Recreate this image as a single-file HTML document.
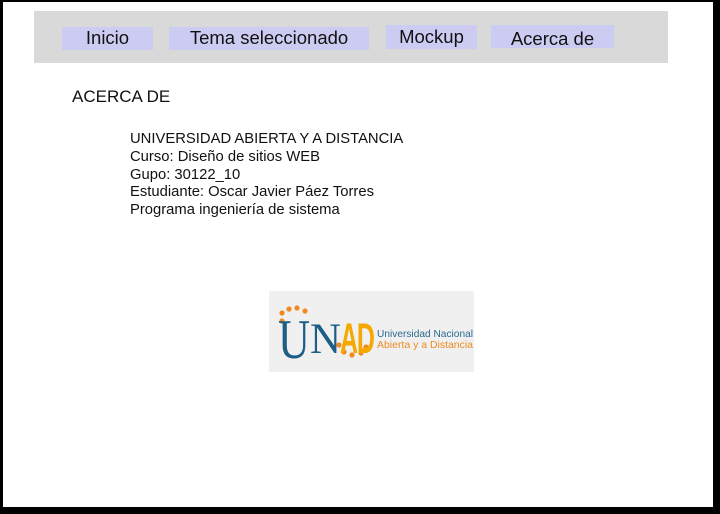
<!DOCTYPE html>
<html><head><meta charset="utf-8"><style>
html,body{margin:0;padding:0;width:720px;height:514px;background:#000;overflow:hidden;font-family:"Liberation Sans",sans-serif;}
#pg{position:absolute;left:3px;top:2px;width:710px;height:505px;background:#fff;}
.nav{position:absolute;left:34px;top:11px;width:634px;height:52px;background:#d9d9d9;}
.b{position:absolute;background:#ccccf2;color:#111;font-size:18.5px;text-align:center;box-sizing:border-box;white-space:nowrap;}
.t{position:absolute;color:#111;}
</style></head><body>
<div id="pg"></div>
<div class="nav"></div>
<div class="b" style="left:62px;top:27px;width:91px;height:23px;line-height:22px">Inicio</div>
<div class="b" style="left:169px;top:27px;width:200px;height:23px;line-height:22px">Tema seleccionado</div>
<div class="b" style="left:386px;top:25px;width:91px;height:24px;line-height:24px">Mockup</div>
<div class="b" style="left:491px;top:25px;width:123px;height:23px;line-height:28px">Acerca de</div>
<div class="t" style="left:72px;top:87px;font-size:17px">ACERCA DE</div>
<div class="t" style="left:130px;top:131px;font-size:14.8px;line-height:17.8px">UNIVERSIDAD ABIERTA Y A DISTANCIA<br>Curso: Diseño de sitios WEB<br>Gupo: 30122_10<br>Estudiante: Oscar Javier Páez Torres<br>Programa ingeniería de sistema</div>
<svg style="position:absolute;left:269px;top:291px" width="205" height="81" viewBox="0 0 205 81">
<rect width="205" height="81" fill="#f0f0f0"/>
<g fill="#f08a1c">
<circle cx="13" cy="22" r="2.6"/><circle cx="20" cy="18" r="2.6"/><circle cx="28" cy="17" r="2.6"/><circle cx="36" cy="20" r="2.6"/><circle cx="13" cy="30" r="2.6"/>
<circle cx="70" cy="54" r="2.6"/><circle cx="75" cy="61" r="2.6"/><circle cx="83" cy="64" r="2.6"/><circle cx="92" cy="62" r="2.6"/><circle cx="97" cy="56" r="2.6"/>
</g>
<text x="9" y="67" font-family="Liberation Serif,serif" font-size="56" fill="#1d5e86" textLength="32" lengthAdjust="spacingAndGlyphs">U</text>
<text x="41" y="62" font-family="Liberation Serif,serif" font-size="43" fill="#1d5e86" textLength="31" lengthAdjust="spacingAndGlyphs">N</text>
<text transform="translate(71,62) scale(0.58,1)" x="0" y="0" font-family="Liberation Sans,sans-serif" font-weight="bold" font-size="43" fill="#f5a800" letter-spacing="-2">AD</text>
<text x="108" y="46" font-family="Liberation Sans,sans-serif" font-size="10.5" fill="#2a6a90" textLength="96" lengthAdjust="spacingAndGlyphs">Universidad Nacional</text>
<text x="108" y="57" font-family="Liberation Sans,sans-serif" font-size="10.5" fill="#ef8a1e" textLength="96" lengthAdjust="spacingAndGlyphs">Abierta y a Distancia</text>
</svg>
</body></html>
